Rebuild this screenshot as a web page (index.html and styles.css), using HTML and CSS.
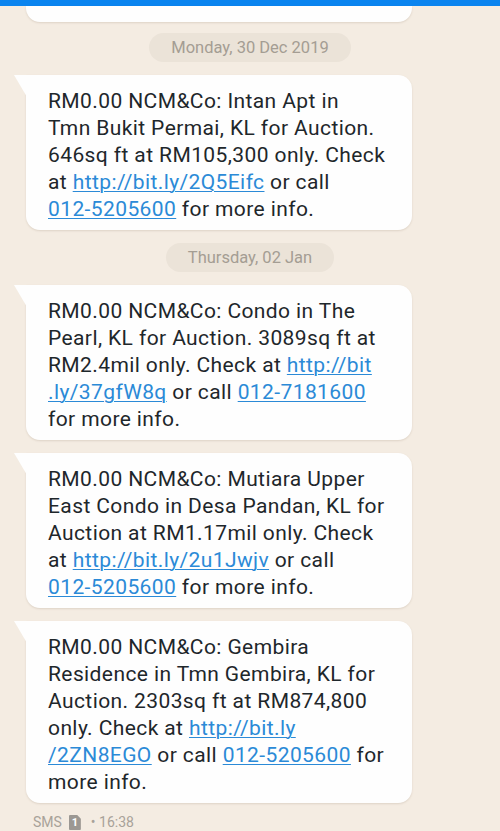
FILE: index.html
```html
<!DOCTYPE html>
<html>
<head>
<meta charset="utf-8">
<link rel="stylesheet" href="styles.css">
</head>
<body>
<div class="appbar"></div>
<div class="thread">
  <div class="bubble-end"></div>
  <div class="date"><span>Monday, 30 Dec 2019</span></div>
  <div class="bubble">RM0.00 NCM&amp;Co: Intan Apt in<br>Tmn Bukit Permai, KL for Auction.<br>646sq ft at RM105,300 only. Check<br>at <a href="#">http://bit.ly/2Q5Eifc</a> or call<br><a href="#">012-5205600</a> for more info.</div>
  <div class="date"><span>Thursday, 02 Jan</span></div>
  <div class="bubble">RM0.00 NCM&amp;Co: Condo in The<br>Pearl, KL for Auction. 3089sq ft at<br>RM2.4mil only. Check at <a href="#">http://bit</a><br><a href="#">.ly/37gfW8q</a> or call <a href="#">012-7181600</a><br>for more info.</div>
  <div class="bubble">RM0.00 NCM&amp;Co: Mutiara Upper<br>East Condo in Desa Pandan, KL for<br>Auction at RM1.17mil only. Check<br>at <a href="#">http://bit.ly/2u1Jwjv</a> or call<br><a href="#">012-5205600</a> for more info.</div>
  <div class="bubble">RM0.00 NCM&amp;Co: Gembira<br>Residence in Tmn Gembira, KL for<br>Auction. 2303sq ft at RM874,800<br>only. Check at <a href="#">http://bit.ly</a><br><a href="#">/2ZN8EGO</a> or call <a href="#">012-5205600</a> for<br>more info.</div>
  <div class="meta"><span>SMS</span><span class="sim">1</span><span>• 16:38</span></div>
</div>
</body>
</html>
```
FILE: styles.css
```css
html, body {
  margin: 0;
  padding: 0;
}
body {
  background: #f4ece2;
  font-family: Roboto, "Noto Sans", sans-serif;
  width: 500px;
  height: 831px;
  overflow: hidden;
}
.appbar {
  height: 6px;
  background: #0a84ef;
}
.thread {
  display: flex;
  flex-direction: column;
  gap: 13px;
  padding: 0 88px 0 26px;
}
.bubble-end {
  height: 16px;
  background: #fefefe;
  border-radius: 0 0 14px 14px;
  box-shadow: 0 1px 2px rgba(120, 100, 80, 0.18);
  margin-bottom: -2px;
}
.date {
  display: flex;
  justify-content: center;
  margin-right: -88px;
  padding-right: 26px;
}
.date span {
  display: block;
  background: #ebe3d8;
  color: #a49d93;
  font-size: 16.5px;
  line-height: 29px;
  height: 29px;
  padding: 0 22px;
  border-radius: 15px;
}
.bubble {
  position: relative;
  background: #fefefe;
  color: #1e272b;
  font-size: 21px;
  letter-spacing: 0.4px;
  line-height: 27px;
  padding: 13px 10px 7px 22px;
  border-radius: 0 14px 14px 14px;
  box-shadow: 0 1px 2px rgba(120, 100, 80, 0.18);
  white-space: nowrap;
}
.bubble::before {
  content: "";
  position: absolute;
  left: -12px;
  top: 0;
  width: 13px;
  height: 22px;
  background: #fefefe;
  clip-path: polygon(0 0, 100% 0, 100% 100%);
}
.bubble a {
  color: #2b8ad7;
  text-decoration: underline;
  text-decoration-thickness: 1px;
  text-underline-offset: 2px;
}
.meta {
  display: flex;
  align-items: center;
  gap: 7px;
  margin-top: -2px;
  padding-left: 7px;
  color: #a8a299;
  font-size: 14px;
  line-height: 17px;
}
.sim {
  display: inline-flex;
  align-items: center;
  justify-content: center;
  width: 12px;
  height: 15px;
  background: #9c9893;
  color: #fefefe;
  font-size: 11px;
  font-weight: bold;
  border-radius: 1px;
  clip-path: polygon(0 0, 70% 0, 100% 25%, 100% 100%, 0 100%);
  margin-right: 3px;
}
```
